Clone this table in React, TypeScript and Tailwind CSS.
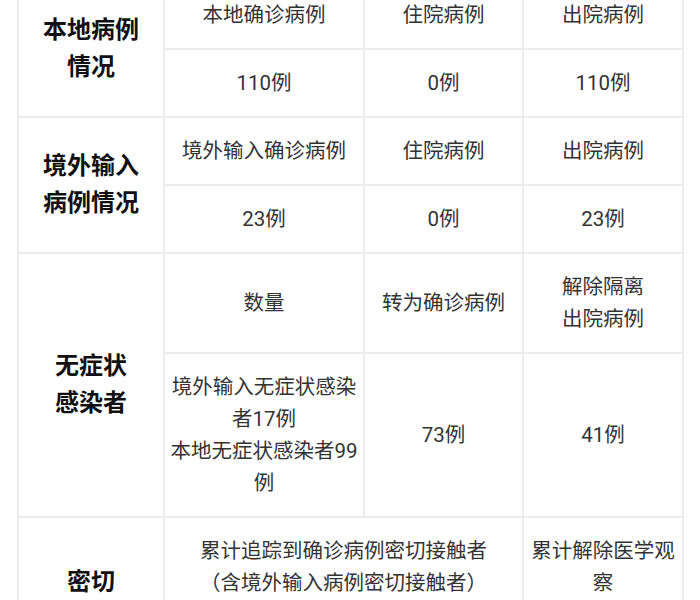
const font = "font-['Roboto','Noto_Sans_CJK_SC',sans-serif]";

const th =
  "border-2 border-[#ececec] text-center align-middle font-bold text-[24px] leading-[37px] text-[#111] px-2";
const td =
  "border-2 border-[#ececec] text-center align-middle text-[20.5px] leading-[32px] text-[#333] px-[5px] py-[17px]";

export default function App() {
  return (
    <div className={`min-h-[600px] w-[700px] overflow-hidden bg-white ${font}`}>
      <table className="-mt-[20px] ml-[17px] w-[665px] table-fixed border-collapse">
        <colgroup>
          <col className="w-[146px]" />
          <col className="w-[200px]" />
          <col className="w-[159px]" />
          <col className="w-[160px]" />
        </colgroup>
        <tbody>
          <tr>
            <th rowSpan={2} className={th}>
              本地病例
              <br />
              情况
            </th>
            <td className={td}>本地确诊病例</td>
            <td className={td}>住院病例</td>
            <td className={td}>出院病例</td>
          </tr>
          <tr>
            <td className={td}>110例</td>
            <td className={td}>0例</td>
            <td className={td}>110例</td>
          </tr>

          <tr>
            <th rowSpan={2} className={th}>
              境外输入
              <br />
              病例情况
            </th>
            <td className={td}>境外输入确诊病例</td>
            <td className={td}>住院病例</td>
            <td className={td}>出院病例</td>
          </tr>
          <tr>
            <td className={td}>23例</td>
            <td className={td}>0例</td>
            <td className={td}>23例</td>
          </tr>

          <tr>
            <th rowSpan={2} className={th}>
              无症状
              <br />
              感染者
            </th>
            <td className={td}>数量</td>
            <td className={td}>转为确诊病例</td>
            <td className={td}>
              解除隔离
              <br />
              出院病例
            </td>
          </tr>
          <tr>
            <td className={`${td} leading-[31px]`}>
              境外输入无症状感染者17例
              <br />
              本地无症状感染者99例
            </td>
            <td className={td}>73例</td>
            <td className={td}>41例</td>
          </tr>

          <tr>
            <th rowSpan={2} className={th}>
              密切
              <br />
              接触者
            </th>
            <td colSpan={2} className={td}>
              累计追踪到确诊病例密切接触者
              <br />
              （含境外输入病例密切接触者）
            </td>
            <td className={td}>累计解除医学观察</td>
          </tr>
          <tr>
            <td colSpan={2} className={td}>1390人</td>
            <td className={td}>1390人</td>
          </tr>
        </tbody>
      </table>
    </div>
  );
}
